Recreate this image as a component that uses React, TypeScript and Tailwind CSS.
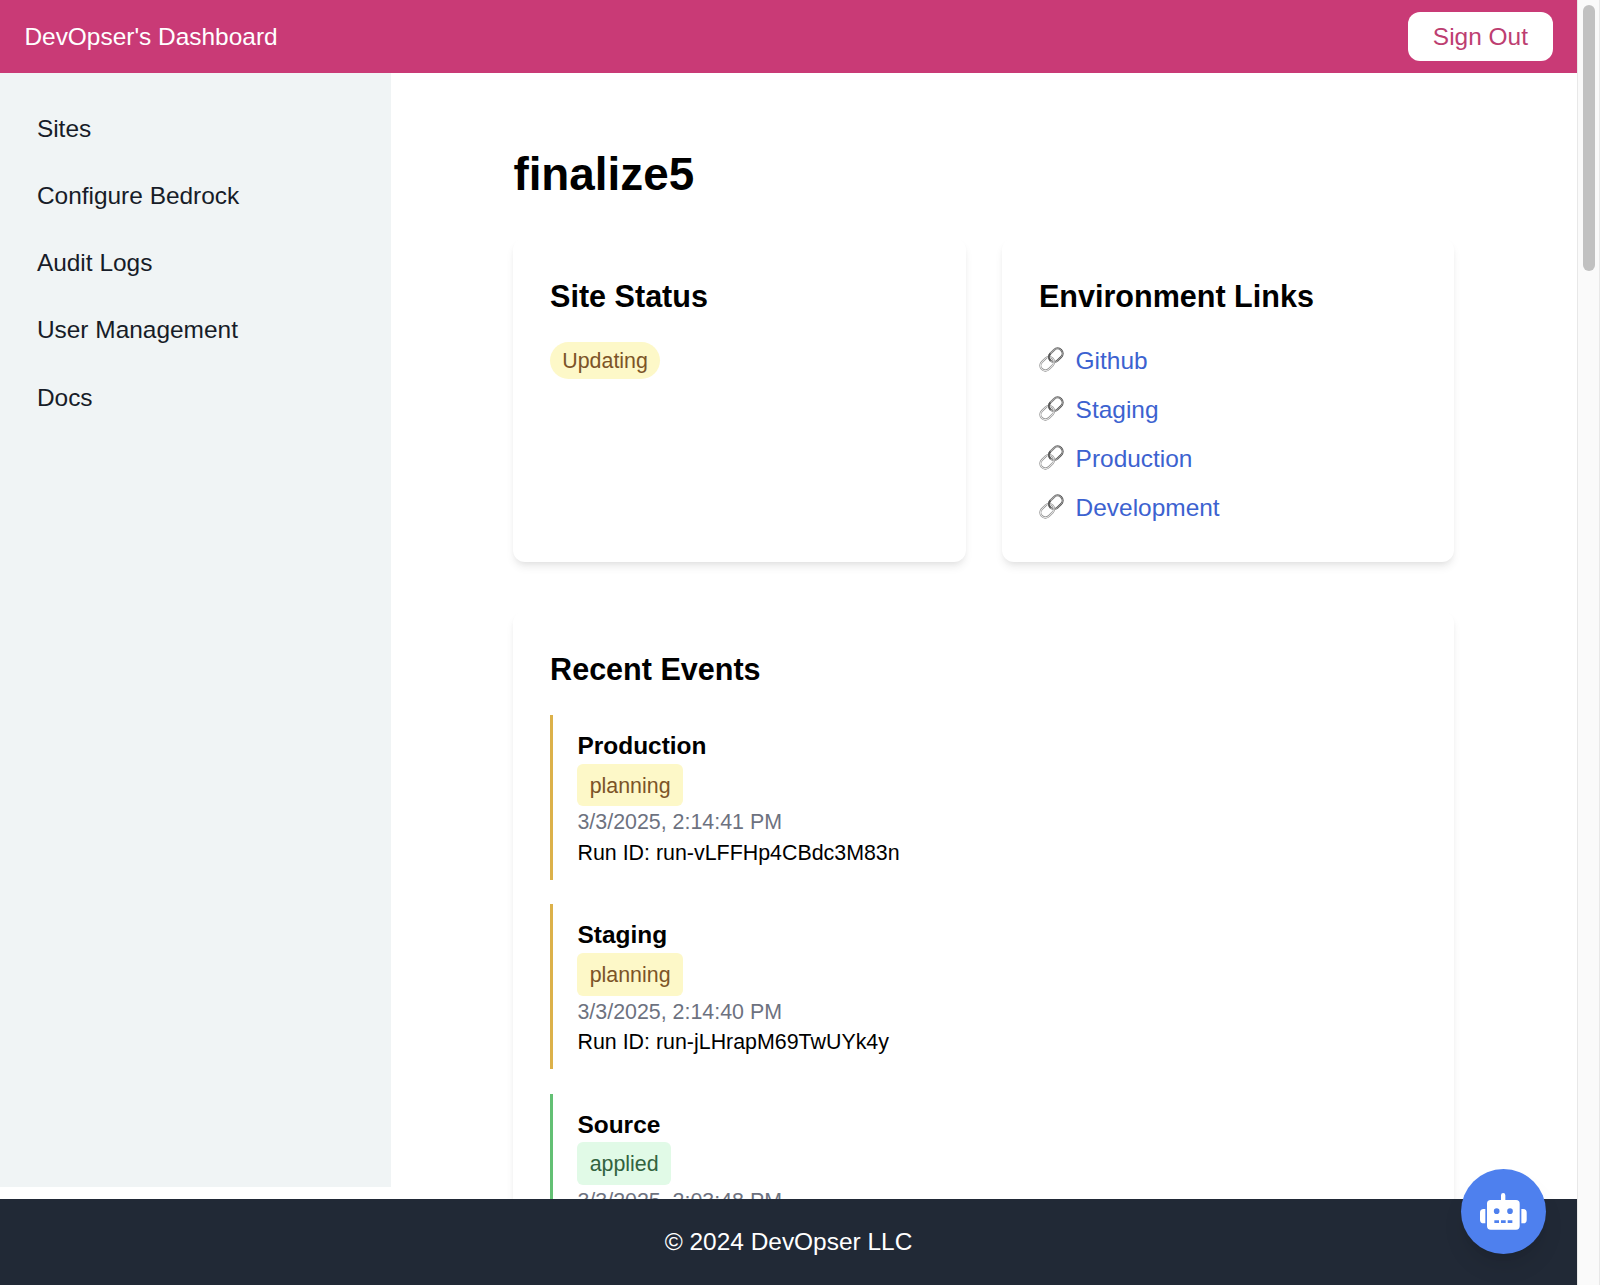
import React from 'react'

const navItems = ['Sites', 'Configure Bedrock', 'Audit Logs', 'User Management', 'Docs']

const envLinks = ['Github', 'Staging', 'Production', 'Development']

const events = [
  { name: 'Production', status: 'planning', date: '3/3/2025, 2:14:41 PM', runId: 'run-vLFFHp4CBdc3M83n' },
  { name: 'Staging', status: 'planning', date: '3/3/2025, 2:14:40 PM', runId: 'run-jLHrapM69TwUYk4y' },
  { name: 'Source', status: 'applied', date: '3/3/2025, 2:03:48 PM', runId: '' },
]

const statusStyles: Record<string, { border: string; badge: string }> = {
  planning: { border: 'border-[#dcb14a]', badge: 'bg-[#fdf8c8] text-[#7c5427]' },
  applied: { border: 'border-[#63c074]', badge: 'bg-[#e1fae7] text-[#32633e]' },
}

const ChainIcon = () => (
  <svg className="-mt-px h-[25px] w-[25px] shrink-0" viewBox="0 0 25 25" fill="none">
    <defs>
      <linearGradient id="chainDark" x1="0" y1="0" x2="1" y2="1">
        <stop offset="0" stopColor="#8a8a8a" />
        <stop offset="1" stopColor="#3e3e3e" />
      </linearGradient>
    </defs>
    <g transform="rotate(-45 12.5 12.5)">
      <rect x="11" y="7.5" width="15.1" height="10" rx="5" stroke="url(#chainDark)" strokeWidth="2.1" />
      <rect x="10.8" y="7.6" width="15.1" height="10" rx="5" stroke="#c4c4c4" strokeWidth="0.7" />
      <rect x="-1.1" y="7.5" width="15.1" height="10" rx="5" stroke="#7d7d7d" strokeWidth="2.1" />
      <rect x="-1.1" y="7.5" width="15.1" height="10" rx="5" stroke="#e4e4e4" strokeWidth="1.1" />
      <path d="M11 12.5c0-2.8 2.200-5 5-5" stroke="#555" strokeWidth="1.9" />
    </g>
  </svg>
)

const RobotIcon = () => (
  <svg className="h-[36.7px] w-[46.7px]" viewBox="0 0 140 110" fill="currentColor">
    <path
      fillRule="evenodd"
      d="M63 21V6.500a6.500 6.500 0 0 1 13 0V21H108a11 11 0 0 1 11 11V99a11 11 0 0 1-11 11H32a11 11 0 0 1-11-11V32a11 11 0 0 1 11-11ZM50 46a8.500 8.500 0 1 0 0 17 8.500 8.500 0 0 0 0-17ZM90 46a8.500 8.500 0 1 0 0 17 8.500 8.500 0 0 0 0-17ZM43 82v8H57v-8ZM63 82v8H77v-8ZM83 82v8H97v-8Z"
    />
    <path d="M16 48V91H11A11 11 0 0 1 0 80V59A11 11 0 0 1 11 48ZM124 48V91h5a11 11 0 0 0 11-11V59a11 11 0 0 0-11-11Z" />
  </svg>
)

const Header = () => (
  <header className="flex h-[73.3px] shrink-0 items-center justify-between bg-[#c93a76] px-[24.4px]">
    <span className="pt-[1.5px] text-white">DevOpser's Dashboard</span>
    <button className="h-[49px] rounded-[12px] bg-white px-[24.7px] pt-[1.5px] text-[#bd3e71]">Sign Out</button>
  </header>
)

const Sidebar = () => (
  <nav className="mb-3 flex w-[391px] shrink-0 flex-col gap-[6.2px] bg-[#f0f4f5] p-[24.4px] pt-[25.3px]">
    {navItems.map((item) => (
      <a key={item} href="#" className="px-[12.5px] py-[12.2px] text-[#171c28]">
        {item}
      </a>
    ))}
  </nav>
)

const Card = ({ title, children }: { title: string; children: React.ReactNode }) => (
  <section className="rounded-[12px] bg-white p-[36.7px] shadow-[0_6px_9px_-1.5px_rgba(0,0,0,0.08),0_3px_6px_-3px_rgba(0,0,0,0.08)]">
    <h2 className="mb-[24.4px] text-[30.55px] leading-[42.8px] font-bold">{title}</h2>
    {children}
  </section>
)

const App = () => {
  return (
    <div className="flex h-[1285px] w-[1600px] overflow-hidden bg-white font-['Liberation_Sans',Arial,sans-serif] text-[24.44px] leading-[36.66px] text-black">
      <div className="relative flex w-[1577px] flex-col">
        <Header />

        <div className="flex min-h-0 flex-1">
          <Sidebar />
          <main className="min-w-0 flex-1 overflow-hidden pt-[73.3px] pr-[122.6px] pl-[122.4px]">
            <h1 className="mb-[36.7px] text-[45.8px] leading-[55px] font-bold">finalize5</h1>

            <div className="mb-[48.9px] grid grid-cols-2 gap-[36.7px]">
              <Card title="Site Status">
                <div className="flex">
                  <span className="rounded-full bg-[#fdf8c8] px-[12.2px] pt-[1.8px] text-[21.4px] leading-[34.86px] text-[#7c5427]">
                    Updating
                  </span>
                </div>
              </Card>
              <Card title="Environment Links">
                <ul className="space-y-[12.2px]">
                  {envLinks.map((link) => (
                    <li key={link} className="flex items-center gap-[11.7px]">
                      <ChainIcon />
                      <a href="#" className="-mb-px pt-px text-[#3c62d0]">{link}</a>
                    </li>
                  ))}
                </ul>
              </Card>
            </div>

            <Card title="Recent Events">
              <div className="space-y-[24.5px]">
                {events.map((event) => (
                  <div
                    key={event.name}
                    className={`border-l-3 py-[12.2px] pl-[24.4px] text-[21.4px] leading-[30.55px] ${statusStyles[event.status].border}`}
                  >
                    <p className="-mb-px pt-px text-[24.44px] leading-[36.66px] font-bold">{event.name}</p>
                    <div className="flex">
                      <span className={`rounded-[6px] px-[12.2px] pt-[7px] pb-[5.2px] ${statusStyles[event.status].badge}`}>
                        {event.status}
                      </span>
                    </div>
                    <div className="-mb-px pt-px">
                      <p className="text-[#6d727f]">{event.date}</p>
                      {event.runId && <p>Run ID: {event.runId}</p>}
                    </div>
                  </div>
                ))}
              </div>
            </Card>
          </main>
        </div>

        <footer className="flex h-[85.6px] shrink-0 items-center justify-center bg-[#212936] text-white">
          © 2024 DevOpser LLC
        </footer>

        {/* Chat button */}
        <button className="absolute right-[30.6px] bottom-[30.6px] flex size-[85.5px] items-center justify-center rounded-full bg-[#4e80ee] text-white shadow-[0_15px_23px_-4px_rgba(0,0,0,0.1),0_6px_9px_-6px_rgba(0,0,0,0.1)]">
          <RobotIcon />
        </button>
      </div>

      {/* Scrollbar */}
      <div className="flex w-[23px] justify-center border-x border-[#e8e8e8] bg-[#fafafa] pt-[5px]">
        <div className="h-[266px] w-3 rounded-full bg-[#c1c1c1]" />
      </div>
    </div>
  )
}

export default App
